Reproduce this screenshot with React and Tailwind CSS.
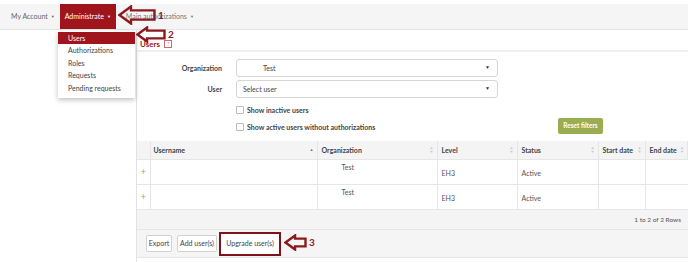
import React from 'react';

const RED = '#a0151c';

const SortBoth = () => (
  <span className="flex flex-col leading-none text-[4px] text-[#c8c8c8]">
    <span>▲</span>
    <span>▼</span>
  </span>
);

const Arrow = ({ className, w, h, label }) => {
  const head = h * 0.65;
  const t = h * 0.27;
  return (
    <div className={`absolute flex items-center gap-[2px] ${className}`}>
      <svg width={w} height={h} viewBox={`0 0 ${w} ${h}`}>
        <polygon
          points={`1.5,${h / 2} ${head},1.5 ${head},${t} ${w - 1.5},${t} ${w - 1.5},${h - t} ${head},${h - t} ${head},${h - 1.5}`}
          fill="none"
          stroke="#8b1a1f"
          strokeWidth="2.4"
          strokeLinejoin="miter"
        />
      </svg>
      <span className="text-[10px] font-bold text-[#8b1a1f]">{label}</span>
    </div>
  );
};

const Select = ({ children, indent }) => (
  <div className={`flex h-[18px] w-[262px] items-center justify-between rounded-[3px] border border-[#d6d6d6] bg-white pr-[7px] ${indent ? 'pl-[26px]' : 'pl-[6px]'}`}>
    <span className="text-[#444]">{children}</span>
    <span className="text-[5px] text-[#333]">▼</span>
  </div>
);

const rows = [1, 2];

export default function App() {
  return (
    <div className="relative h-[262px] w-[688px] overflow-hidden bg-white font-['Lato',sans-serif] text-[7px] text-[#333]">
      {/* top nav */}
      <div className="mt-[4px] flex h-[26px] items-stretch border-b border-[#e4e4e4] bg-[#f5f5f5]">
        <div className="flex items-center gap-[3px] pl-[11px] pr-[5px] text-[#666]">
          My Account <span className="text-[4px]">▼</span>
        </div>
        <div className="flex w-[56px] items-center justify-center gap-[3px] text-white" style={{ background: RED }}>
          Administrate <span className="text-[4px]">▼</span>
        </div>
        <div className="flex items-center gap-[3px] pl-[10px] text-[#777]">
          Main authorizations <span className="text-[4px]">▼</span>
        </div>
      </div>

      <div className="flex">
        {/* sidebar */}
        <div className="h-[232px] w-[137px] shrink-0 border-r border-[#e2e2e2]" />

        {/* main */}
        <div className="flex-1">
          <div className="flex h-[22px] items-end gap-[4px] border-b-[2px] border-[#efefef] pb-[2px] pl-[3px] leading-[8px]">
            <span className="text-[8px] font-bold" style={{ color: RED }}>Users</span>
            <span className="flex h-[8px] w-[8px] items-center justify-center border border-[#c86a6e] text-[5px] leading-none text-[#c86a6e]">?</span>
          </div>

          <div className="relative pt-[7px]">
            <div className="flex items-center">
              <span className="w-[85px] text-right font-bold text-[#444]">Organization</span>
              <div className="ml-[14px]"><Select indent>Test</Select></div>
            </div>
            <div className="mt-[3px] flex items-center">
              <span className="w-[85px] text-right font-bold text-[#444]">User</span>
              <div className="ml-[14px]"><Select>Select user</Select></div>
            </div>
            <div className="ml-[99px] mt-[7px] flex flex-col gap-[6px]">
              <label className="flex items-center gap-[3px] font-bold text-[#444]">
                <span className="h-[8px] w-[8px] rounded-[1px] border border-[#bbb] bg-white" />
                Show inactive users
              </label>
              <label className="flex items-center gap-[3px] font-bold text-[#444]">
                <span className="h-[8px] w-[8px] rounded-[1px] border border-[#bbb] bg-white" />
                Show active users without authorizations
              </label>
            </div>
            <button className="absolute left-[421px] top-[66px] flex h-[16px] w-[45px] items-center justify-center rounded-[2px] bg-[#9aad52] text-[6.5px] font-bold text-white">
              Reset filters
            </button>
          </div>

          {/* table */}
          <table className="mt-[9px] w-full table-fixed border-collapse">
            <colgroup>
              <col className="w-[13px]" />
              <col className="w-[167px]" />
              <col className="w-[120px]" />
              <col className="w-[80px]" />
              <col className="w-[81px]" />
              <col className="w-[47px]" />
              <col />
            </colgroup>
            <thead>
              <tr className="h-[18px] bg-[#f4f4f4] text-left font-bold text-[#444]">
                <th className="border-r border-[#e6e6e6]" />
                <th className="border-r border-[#e6e6e6] pl-[3px]">
                  <div className="flex items-center justify-between pr-[3px]">
                    Username <span className="text-[4px] text-[#5b6fd6]">▲</span>
                  </div>
                </th>
                {['Organization', 'Level', 'Status', 'Start date', 'End date'].map((h) => (
                  <th key={h} className="border-r border-[#e6e6e6] pl-[4px]">
                    <div className="flex items-center justify-between pr-[3px]">
                      {h} <SortBoth />
                    </div>
                  </th>
                ))}
              </tr>
            </thead>
            <tbody>
              {rows.map((r) => (
                <tr key={r} className="h-[25px] border-t border-[#e6e6e6] text-[#555]">
                  <td className="border-r border-[#e6e6e6] text-center text-[9px] text-[#c98a8a]">+</td>
                  <td className="border-r border-[#e6e6e6]" />
                  <td className="border-r border-[#e6e6e6] pb-[9px] pl-[24px] align-middle">Test</td>
                  <td className="border-r border-[#e6e6e6] pl-[4px] pt-[3px]">EH3</td>
                  <td className="border-r border-[#e6e6e6] pl-[4px] pt-[3px]">Active</td>
                  <td className="border-r border-[#e6e6e6]" />
                  <td />
                </tr>
              ))}
            </tbody>
          </table>

          <div className="flex h-[21px] items-center justify-end border-y border-[#e6e6e6] bg-[#f4f4f4] pr-[7px] text-[6.5px] text-[#555]">
            1 to 2 of 2 Rows
          </div>
          <div className="flex h-[28px] items-center border-b border-[#e6e6e6] bg-[#f5f5f5] pl-[9px] text-[7px] text-[#444]">
            <button className="flex h-[17px] w-[26px] items-center justify-center rounded-[2px] border border-[#d2d2d2] bg-white">Export</button>
            <button className="ml-[5px] flex h-[17px] w-[40px] items-center justify-center rounded-[2px] border border-[#d2d2d2] bg-white">Add user(s)</button>
            <button className="ml-[2px] flex h-[24px] w-[62px] items-center justify-center border-[2px] border-[#7e1419] bg-white">Upgrade user(s)</button>
          </div>
        </div>
      </div>

      {/* dropdown menu */}
      <div className="absolute left-[58px] top-[31px] w-[77px] bg-white pb-[4px] pt-[1px] shadow-[0_2px_5px_rgba(0,0,0,0.25)]">
        <div className="flex h-[12px] items-center pl-[10px] text-white" style={{ background: RED }}>Users</div>
        {['Authorizations', 'Roles', 'Requests', 'Pending requests'].map((m) => (
          <div key={m} className="flex h-[12.6px] items-center pl-[10px] text-[#444]">{m}</div>
        ))}
      </div>

      <Arrow className="left-[118px] top-[5px]" w={38} h={20} label="1" />
      <Arrow className="left-[136px] top-[26px]" w={30} h={17} label="2" />
      <Arrow className="left-[284px] top-[234px]" w={23} h={17} label="3" />
    </div>
  );
}
